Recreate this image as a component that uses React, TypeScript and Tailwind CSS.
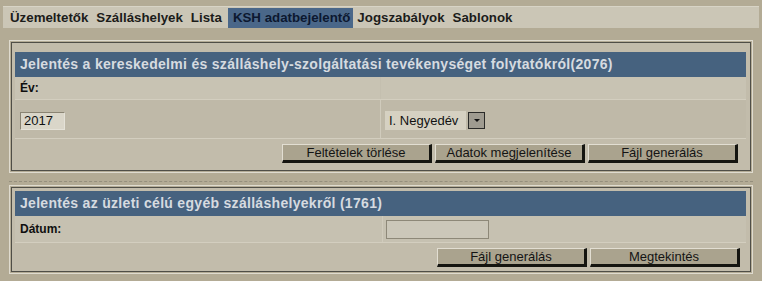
import React from 'react';

const navItems = ['Üzemeltetők', 'Szálláshelyek', 'Lista', 'KSH adatbejelentő', 'Jogszabályok', 'Sablonok'];

function Btn({ label, className }: { label: string; className?: string }) {
  return (
    <button
      className={
        'h-[19px] w-[150px] bg-[#aaa38e] border-t border-l border-t-[#e2ded2] border-l-[#e2ded2] border-r-[3px] border-b-[3px] border-r-[#151510] border-b-[#151510] text-[13px] leading-[14px] text-[#141414] ' +
        (className ?? '')
      }
    >
      {label}
    </button>
  );
}

function Panel({ children, className }: { children: React.ReactNode; className?: string }) {
  return (
    <div className={'mx-[9px] border border-[#dfdbcf] p-[1px] ' + (className ?? '')}>
      <div className="border border-[#4f4e47] bg-[#c2bcab]">{children}</div>
    </div>
  );
}

function Header({ text }: { text: string }) {
  return (
    <div className="h-[25px] bg-[#46627f] flex items-center pl-[5px] text-[14px] font-bold text-[#d6dbe0] tracking-[0.3px]">
      {text}
    </div>
  );
}

export default function App() {
  return (
    <div className="w-[762px] h-[281px] overflow-hidden bg-[#b3ab95] pt-[6px] font-['Liberation_Sans',Arial,sans-serif]">
      <div className="mx-[3px] h-[22px] bg-[#cbc6b6] border-t border-[#d8d4c6] flex items-center pl-[3px]">
        {navItems.map((item) => (
          <span
            key={item}
            className={
              'h-[20px] flex items-center text-[13.3px] font-bold ' +
              (item === 'KSH adatbejelentő' ? 'pl-[5px] pr-[3px] ml-[2px] bg-[#4a6789] text-[#0c1830]' : 'px-[4px] text-[#1c1c1a]')
            }
          >
            {item}
          </span>
        ))}
      </div>

      <div className="mt-[12px]">
        <Panel>
          <div className="pl-[3px] pr-[4px] pt-[9px] pb-[2px]">
            <Header text="Jelentés a kereskedelmi és szálláshely-szolgáltatási tevékenységet folytatókról(2076)" />
            <div className="grid grid-cols-[365px_1fr] h-[23px] bg-[#c8c3b3] border-b border-[#d3cebf]">
              <div className="flex items-center pl-[5px] text-[12px] font-bold text-[#0f0f0f]">Év:</div>
              <div className="border-l border-[#c4bfaf]" />
            </div>
            <div className="grid grid-cols-[365px_1fr] h-[39px] bg-[#bfb9a8] border-b border-[#d3cebf]">
              <div className="flex items-center pl-[5px] pt-[3px]">
                <div className="w-[45px] h-[18px] bg-[#dad6c9] border-t border-l border-[#8a8473] border-r border-b border-r-[#e5e2d8] border-b-[#e5e2d8] flex items-center pl-[3px] text-[13px] text-[#111]">
                  2017
                </div>
              </div>
              <div className="border-l border-[#d0cbbc] flex items-center pl-[4px] pt-[3px]">
                <div className="w-[100px] h-[19px] flex items-center gap-[2px] text-[13px] text-[#111]">
                  <span className="h-full w-[82px] bg-[#d6d1c2] flex items-center pl-[4px]">I. Negyedév</span>
                  <span className="w-[17px] h-[17px] bg-[#9f9b90] border border-[#2a2a28] flex items-center justify-center">
                    <svg width="8" height="5" viewBox="0 0 8 5">
                      <path d="M1 1 L7 1 L4 4 Z" fill="#111" />
                    </svg>
                  </span>
                </div>
              </div>
            </div>
            <div className="h-[29px] flex justify-end items-start pt-[5px] pr-[8px] gap-[3px]">
              <Btn label="Feltételek törlése" />
              <Btn label="Adatok megjelenítése" />
              <Btn label="Fájl generálás" />
            </div>
          </div>
        </Panel>
      </div>

      <div className="mx-[9px] mt-[8px] border-t border-dashed border-[#958f7d]" />

      <div className="mt-[3px]">
        <Panel>
          <div className="pl-[3px] pr-[4px] pt-[3px] pb-[2px]">
            <Header text="Jelentés az üzleti célú egyéb szálláshelyekről (1761)" />
            <div className="grid grid-cols-[367px_1fr] h-[27px] bg-[#c6c1b1] border-b border-[#d3cebf]">
              <div className="flex items-center pl-[5px] text-[12px] font-bold text-[#0f0f0f]">Dátum:</div>
              <div className="border-l border-[#d0cbbc] flex items-center pl-[3px]">
                <div className="w-[103px] h-[19px] bg-[#cbc7b9] border border-[#8d8878]" />
              </div>
            </div>
            <div className="h-[26px] flex justify-end items-start pt-[5px] pr-[6px] gap-[3px]">
              <Btn label="Fájl generálás" />
              <Btn label="Megtekintés" />
            </div>
          </div>
        </Panel>
      </div>
    </div>
  );
}
